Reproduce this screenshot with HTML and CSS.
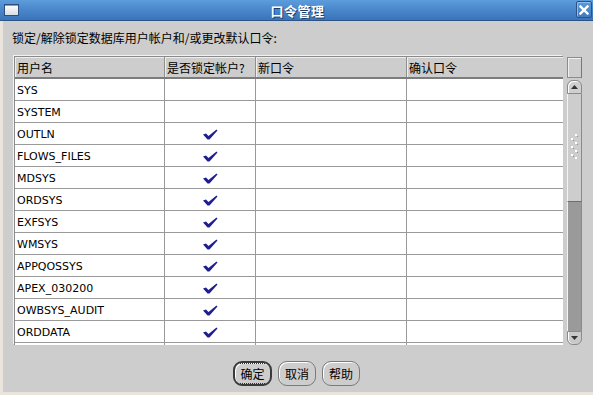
FILE: index.html
```html
<!DOCTYPE html>
<html lang="zh">
<head>
<meta charset="utf-8">
<title>口令管理</title>
<link rel="stylesheet" href="styles.css">
</head>
<body>
<div class="window">
  <div class="titlebar">
    <span class="ticon"></span>
    <span class="title">口令管理</span>
    <span class="close">
      <svg width="10" height="10" viewBox="0 0 10 10"><path d="M1.5 1.5 L8.5 8.5 M8.5 1.5 L1.5 8.5" stroke="#fff" stroke-width="2.4" stroke-linecap="square"/></svg>
    </span>
  </div>
  <div class="body">
    <div class="label">锁定/解除锁定数据库用户帐户和/或更改默认口令:</div>
    <div class="tablewrap">
      <div class="grid">
        <div class="row head"><div class="c">用户名</div><div class="c">是否锁定帐户?</div><div class="c">新口令</div><div class="c">确认口令</div></div>
        <div class="row"><div class="c name">SYS</div><div class="c chk"></div><div class="c"></div><div class="c"></div></div>
        <div class="row"><div class="c name">SYSTEM</div><div class="c chk"></div><div class="c"></div><div class="c"></div></div>
        <div class="row"><div class="c name">OUTLN</div><div class="c chk"><svg class="tick" width="15" height="11" viewBox="0 0 15 11"><polygon points="0,5.5 3,4.5 5.5,7 13.5,0.5 14.5,1.5 6.5,10.5 4.5,10.5" fill="#1f1f8f"/></svg></div><div class="c"></div><div class="c"></div></div>
        <div class="row"><div class="c name">FLOWS_FILES</div><div class="c chk"><svg class="tick" width="15" height="11" viewBox="0 0 15 11"><polygon points="0,5.5 3,4.5 5.5,7 13.5,0.5 14.5,1.5 6.5,10.5 4.5,10.5" fill="#1f1f8f"/></svg></div><div class="c"></div><div class="c"></div></div>
        <div class="row"><div class="c name">MDSYS</div><div class="c chk"><svg class="tick" width="15" height="11" viewBox="0 0 15 11"><polygon points="0,5.5 3,4.5 5.5,7 13.5,0.5 14.5,1.5 6.5,10.5 4.5,10.5" fill="#1f1f8f"/></svg></div><div class="c"></div><div class="c"></div></div>
        <div class="row"><div class="c name">ORDSYS</div><div class="c chk"><svg class="tick" width="15" height="11" viewBox="0 0 15 11"><polygon points="0,5.5 3,4.5 5.5,7 13.5,0.5 14.5,1.5 6.5,10.5 4.5,10.5" fill="#1f1f8f"/></svg></div><div class="c"></div><div class="c"></div></div>
        <div class="row"><div class="c name">EXFSYS</div><div class="c chk"><svg class="tick" width="15" height="11" viewBox="0 0 15 11"><polygon points="0,5.5 3,4.5 5.5,7 13.5,0.5 14.5,1.5 6.5,10.5 4.5,10.5" fill="#1f1f8f"/></svg></div><div class="c"></div><div class="c"></div></div>
        <div class="row"><div class="c name">WMSYS</div><div class="c chk"><svg class="tick" width="15" height="11" viewBox="0 0 15 11"><polygon points="0,5.5 3,4.5 5.5,7 13.5,0.5 14.5,1.5 6.5,10.5 4.5,10.5" fill="#1f1f8f"/></svg></div><div class="c"></div><div class="c"></div></div>
        <div class="row"><div class="c name">APPQOSSYS</div><div class="c chk"><svg class="tick" width="15" height="11" viewBox="0 0 15 11"><polygon points="0,5.5 3,4.5 5.5,7 13.5,0.5 14.5,1.5 6.5,10.5 4.5,10.5" fill="#1f1f8f"/></svg></div><div class="c"></div><div class="c"></div></div>
        <div class="row"><div class="c name">APEX_030200</div><div class="c chk"><svg class="tick" width="15" height="11" viewBox="0 0 15 11"><polygon points="0,5.5 3,4.5 5.5,7 13.5,0.5 14.5,1.5 6.5,10.5 4.5,10.5" fill="#1f1f8f"/></svg></div><div class="c"></div><div class="c"></div></div>
        <div class="row"><div class="c name">OWBSYS_AUDIT</div><div class="c chk"><svg class="tick" width="15" height="11" viewBox="0 0 15 11"><polygon points="0,5.5 3,4.5 5.5,7 13.5,0.5 14.5,1.5 6.5,10.5 4.5,10.5" fill="#1f1f8f"/></svg></div><div class="c"></div><div class="c"></div></div>
        <div class="row"><div class="c name">ORDDATA</div><div class="c chk"><svg class="tick" width="15" height="11" viewBox="0 0 15 11"><polygon points="0,5.5 3,4.5 5.5,7 13.5,0.5 14.5,1.5 6.5,10.5 4.5,10.5" fill="#1f1f8f"/></svg></div><div class="c"></div><div class="c"></div></div>
        <div class="row"><div class="c name"></div><div class="c chk"></div><div class="c"></div><div class="c"></div></div>
      </div>
      <div class="scroll">
        <div class="shead"></div>
        <div class="sbtn up"><svg width="7" height="4" viewBox="0 0 7 4"><polygon points="0,4 3.5,0 7,4" fill="#333"/></svg></div>
        <div class="thumb">
          <svg width="9" height="25" viewBox="0 0 9 25">
            <g fill="#fff"><rect x="5" y="0" width="2" height="2"/><rect x="1" y="4" width="2" height="2"/><rect x="5" y="8" width="2" height="2"/><rect x="1" y="12" width="2" height="2"/><rect x="5" y="16" width="2" height="2"/><rect x="1" y="20" width="2" height="2"/><rect x="5" y="23" width="2" height="2"/></g>
            <g fill="#8a8a8a"><rect x="7" y="2" width="1" height="1"/><rect x="3" y="6" width="1" height="1"/><rect x="7" y="10" width="1" height="1"/><rect x="3" y="14" width="1" height="1"/><rect x="7" y="18" width="1" height="1"/><rect x="3" y="22" width="1" height="1"/></g>
          </svg>
        </div>
        <div class="track"></div>
        <div class="sbtn down"><svg width="7" height="4" viewBox="0 0 7 4"><polygon points="0,0 3.5,4 7,0" fill="#333"/></svg></div>
      </div>
    </div>
    <div class="buttons">
      <button class="btn def"><span class="focus">确定</span></button>
      <button class="btn">取消</button>
      <button class="btn">帮助</button>
    </div>
  </div>
</div>
</body>
</html>
```

FILE: styles.css
```css
* { box-sizing: border-box; }
html, body { margin: 0; padding: 0; }
body {
  width: 593px;
  height: 395px;
  overflow: hidden;
  background: #cdcdcd;
  font-family: "DejaVu Sans", "Noto Sans CJK SC", sans-serif;
  font-size: 12px;
  color: #000;
}
.window {
  width: 593px;
  height: 395px;
  display: flex;
  flex-direction: column;
}
.titlebar {
  height: 21px;
  flex: none;
  background: linear-gradient(#5d9ddc, #4a88cc 45%, #3b74b8);
  border-bottom: 1px solid #2b5486;
  position: relative;
  display: flex;
  align-items: center;
  justify-content: center;
}
.ticon {
  position: absolute;
  left: 4px;
  top: 4px;
  width: 15px;
  height: 12px;
  border: 1px solid #2c4f7e;
  background: linear-gradient(#ffffff, #d9dde4);
  box-shadow: inset 0 1px 0 #8aa2c2;
}
.title {
  color: #fff;
  font-family: "Noto Sans CJK SC", sans-serif;
  font-weight: bold;
  font-size: 13px;
  letter-spacing: 0.5px;
  text-shadow: 1px 1px 0 #1d3d66;
  margin-left: 2px;
}
.close {
  position: absolute;
  right: 1px;
  top: 1px;
  width: 16px;
  height: 17px;
  border: 1px solid #2c5384;
  border-radius: 2px;
  background: linear-gradient(#5b9bda, #3f7bbf);
  box-shadow: inset 1px 1px 0 #8fbcea;
  display: flex;
  align-items: center;
  justify-content: center;
}
.body {
  flex: 1;
  border-left: 3px solid #e9e5dd;
  border-bottom: 3px solid #e9e5dd;
  display: flex;
  flex-direction: column;
}
.label {
  margin-top: 9px;
  margin-left: 9px;
  height: 16px;
  line-height: 16px;
  font-size: 12px;
  font-family: "Noto Sans CJK SC", sans-serif;
  letter-spacing: 0;
}
.tablewrap {
  margin-top: 10px;
  margin-left: 11px;
  display: flex;
  height: 289px;
}
.grid {
  width: 549px;
  height: 289px;
  overflow: hidden;
  border-left: 1px solid #8a8a8a;
  border-top: 1px solid #8a8a8a;
  background: #fff;
  box-shadow: -1px -1px 0 #f2f2f2;
}
.row {
  display: grid;
  grid-template-columns: 150px 91px 151px 157px;
  height: 22px;
  border-bottom: 1px solid #999;
}
.row.head {
  background: #cdcdcd;
  height: 22px;
  border-bottom: 2px solid #7c7c7c;
}
.c {
  border-right: 1px solid #999;
  display: flex;
  align-items: center;
  padding-left: 2px;
  overflow: hidden;
  white-space: nowrap;
}
.head .c {
  font-family: "Noto Sans CJK SC", sans-serif;
  font-size: 12px;
  border-right-color: #8f8f8f;
  box-shadow: inset 1px 1px 0 #eeeeee;
}
.c.name {
  font-size: 11px;
  padding-top: 1px;
}
.c.chk {
  justify-content: center;
  padding-left: 0;
  padding-top: 2px;
}
.scroll {
  width: 15px;
  margin-left: 4px;
  display: flex;
  flex-direction: column;
  height: 288px;
  margin-top: 1px;
}
.shead {
  height: 21px;
  border: 1px solid #8c8c8c;
  border-right-color: #777;
  background: #cdcdcd;
  box-shadow: inset 1px 1px 0 #f0f0f0;
}
.sbtn {
  height: 14px;
  background: #cfcfcf;
  border: 1px solid #8a8a8a;
  display: flex;
  align-items: center;
  justify-content: center;
}
.sbtn.up {
  margin-top: 2px;
  border-radius: 6px 6px 0 0;
  box-shadow: inset 1px 1px 0 #fff;
}
.sbtn.down {
  border-radius: 0 0 6px 6px;
  box-shadow: inset 1px 0 0 #fff;
  background: #c9c9c9;
}
.thumb {
  height: 108px;
  background: #cdcdcd;
  border-left: 1px solid #f4f4f4;
  border-right: 1px solid #8a8a8a;
  border-bottom: 1px solid #6e6e6e;
  display: flex;
  align-items: flex-start;
  justify-content: center;
  padding-top: 40px;
}
.track {
  flex: 1;
  background: #9a9a9a;
  border-left: 1px solid #f4f4f4;
  border-right: 1px solid #8a8a8a;
}
.buttons {
  display: flex;
  justify-content: center;
  gap: 6px;
  margin-top: 16px;
  margin-left: -3px;
}
.btn {
  height: 25px;
  padding: 0 5px;
  background: #cdcdcd;
  border: 1px solid #7a7a7a;
  border-radius: 9px;
  box-shadow: inset 1px 1px 0 #fff;
  font-family: "Noto Sans CJK SC", sans-serif;
  font-size: 12px;
  color: #000;
  min-width: 38px;
}
.btn.def {
  border: 2px solid #3a3a3a;
  min-width: 39px;
}
.btn.def .focus {
  border-top: 1px dotted #333;
  border-bottom: 1px dotted #333;
  padding: 1px 0;
}
```
